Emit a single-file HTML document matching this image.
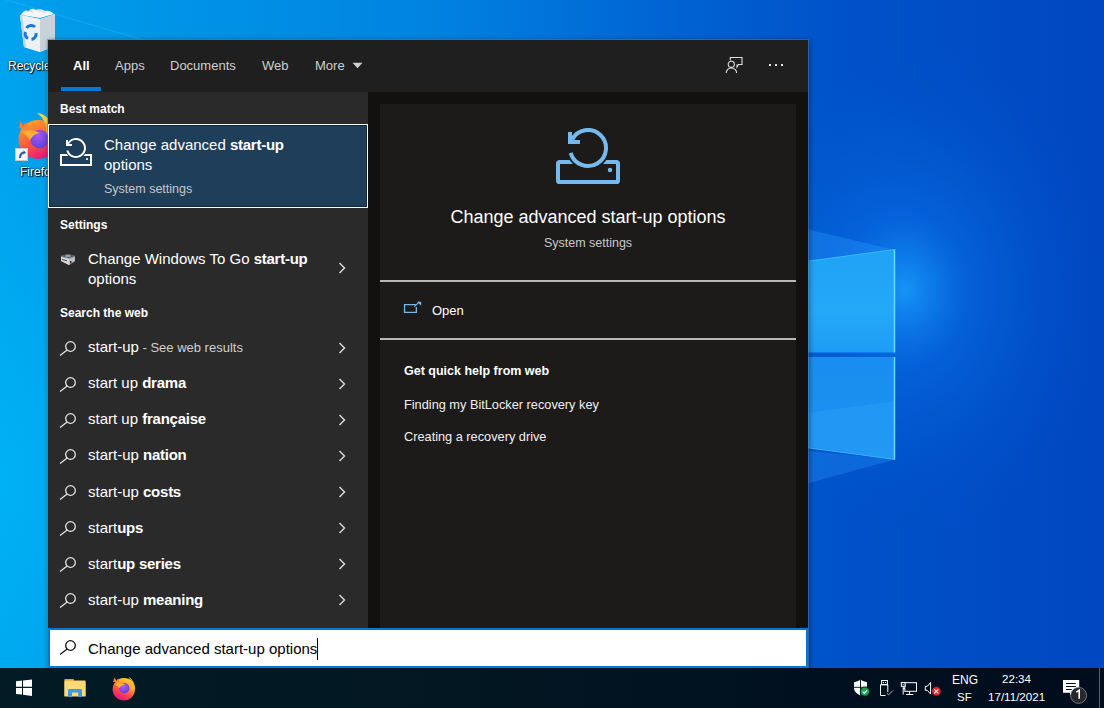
<!DOCTYPE html>
<html><head><meta charset="utf-8"><style>
*{margin:0;padding:0;box-sizing:border-box}
html,body{width:1104px;height:708px;overflow:hidden}
body{position:relative;font-family:"Liberation Sans",sans-serif;background:#0050c8}
.a{position:absolute}
.t{position:absolute;white-space:nowrap;line-height:20px}
b{font-weight:bold;letter-spacing:-0.25px}
#bg{left:0;top:0;width:1104px;height:668px;overflow:hidden;
background:linear-gradient(100deg,#00a6ee 0%,#009ce9 5%,#0078dc 50%,#0058cc 75%,#0049c2 100%)}
</style></head><body>
<svg class="a" style="left:0;top:0" width="1104" height="668" viewBox="0 0 1104 668">
<defs>
<linearGradient id="g1" x1="0" y1="0" x2="1" y2="0">
<stop offset="0" stop-color="#00a4ee"/><stop offset="0.06" stop-color="#009be9"/><stop offset="0.38" stop-color="#0084e2"/>
<stop offset="0.62" stop-color="#0062d2"/><stop offset="0.76" stop-color="#0052c9"/><stop offset="1" stop-color="#0047c1"/></linearGradient>
<radialGradient id="glow" cx="905" cy="290" r="210" gradientUnits="userSpaceOnUse" gradientTransform="translate(905 290) scale(1.0 1.2) translate(-905 -290)">
<stop offset="0" stop-color="#1aa0ff" stop-opacity="0.85"/><stop offset="0.3" stop-color="#0a78f0" stop-opacity="0.45"/><stop offset="1" stop-color="#0050c8" stop-opacity="0"/></radialGradient>
<radialGradient id="lglow" cx="0" cy="480" r="260" gradientUnits="userSpaceOnUse" gradientTransform="translate(0 480) scale(1 1.4) translate(0 -480)"><stop offset="0" stop-color="#00b4f6" stop-opacity="0.8"/><stop offset="0.5" stop-color="#00b0f4" stop-opacity="0.5"/><stop offset="1" stop-color="#00a8f0" stop-opacity="0"/></radialGradient>
<linearGradient id="pane1" x1="0" y1="0" x2="0" y2="1"><stop offset="0" stop-color="#20a2f6"/><stop offset="0.6" stop-color="#24a8f8"/><stop offset="1" stop-color="#1e9cf5"/></linearGradient>
<linearGradient id="pane2" x1="0" y1="0" x2="0" y2="1"><stop offset="0" stop-color="#1a8ef0"/><stop offset="1" stop-color="#1c92f1"/></linearGradient>
</defs>
<rect width="1104" height="668" fill="url(#g1)"/>
<rect width="1104" height="668" fill="url(#glow)"/>
<rect width="1104" height="668" fill="url(#lglow)"/>
<line x1="0" y1="-2" x2="150" y2="42" stroke="#40c0ff" stroke-width="1.2" opacity="0.3"/>
<polygon points="600,180 895,250 600,290" fill="#2a9cff" opacity="0.35"/>
<polygon points="600,289 895,249.5 895,352.5 600,352.5" fill="url(#pane1)"/>
<polygon points="600,357 895,357 895,459.5 600,420" fill="url(#pane2)"/>
<polygon points="800,414.1 895,400.9 895,459.5 800,445.6" fill="#2a9ef8" opacity="0.5"/>
<polygon points="600,540 895,459.5 600,430" fill="#2a9cff" opacity="0.3"/>
<line x1="894.5" y1="249.5" x2="894.5" y2="352.5" stroke="#5fdcff" stroke-width="1.5"/>
<line x1="894.5" y1="357" x2="894.5" y2="459.5" stroke="#5fdcff" stroke-width="1.5"/>
<line x1="600" y1="289" x2="895" y2="249.5" stroke="#50c8ff" stroke-width="1" opacity="0.7"/>
<line x1="600" y1="420" x2="895" y2="459.5" stroke="#50c8ff" stroke-width="1" opacity="0.7"/>
</svg>
<svg class="a" style="left:0;top:0" width="60" height="190" viewBox="0 0 60 190">
<defs><linearGradient id="ffb" x1="0.2" y1="0.1" x2="0.6" y2="1"><stop offset="0" stop-color="#ff9a2a"/><stop offset="0.5" stop-color="#ff5a3e"/><stop offset="1" stop-color="#e6157c"/></linearGradient>
<radialGradient id="ffp" cx="0.4" cy="0.3" r="0.8"><stop offset="0" stop-color="#a855f7"/><stop offset="1" stop-color="#5b3fd6"/></radialGradient></defs>
<polygon points="20,15 40,19 55,14 55,46 40,52 24,47" fill="#dce4ea"/>
<polygon points="20,15 40,19 40,52 24,47" fill="#eef1f3"/>
<polygon points="40,19 55,15 55,46 40,52" fill="#c8d2d9"/>
<polygon points="20,15 22,15 26,47 24,47" fill="#b8d6ee"/>
<path d="M21 15Q24 9 29 11Q31 7 36 10Q41 8 45 11Q50 10 54 14L40 18z" fill="#f4f6f8"/>
<path d="M27 12Q30 10 33 12M38 11Q42 10 45 13" fill="none" stroke="#c9d0d6" stroke-width="1"/>
<path d="M26.5 28a5.5 5.5 0 0 1 8.5-1 M36 33a5.5 5.5 0 0 1-4.5 6.5 M28 38.5a5.5 5.5 0 0 1-2.5-6.5" fill="none" stroke="#1a78d6" stroke-width="3"/>
<circle cx="38" cy="139.5" r="19.5" fill="url(#ffb)"/>
<path d="M37 113Q52 115 55 134L46 131Q47 120 37 113z" fill="#ffd53a"/>
<path d="M43 120Q52 126 52 140L46 136Q47 126 43 120z" fill="#ffb02e"/>
<path d="M19 128L20.5 121L23.5 126L26 122L28 127Q24 130 19 128z" fill="#ff7e2e"/>
<circle cx="39.5" cy="139" r="9.3" fill="url(#ffp)"/>
<path d="M22 132Q31 128 40 133Q33 134 30 140Q27 135 22 132z" fill="#ffae36"/>
<rect x="15.5" y="148.5" width="12" height="12" fill="#f4f4f4" stroke="#c8c8c8" stroke-width="1"/>
<path d="M19 158 Q19 152 24 151.5 L23 150 L26 152.5 L23 155 L24 153.5 Q21 154 21 158z" fill="#2a5aa8"/>
</svg>
<div class="t" style="left:8px;top:55.5px;font-size:12px;color:#fff;text-shadow:0 0 2px #000,1px 1px 1px #000">Recycle Bin</div>
<div class="t" style="left:20px;top:161.5px;font-size:12px;color:#fff;text-shadow:0 0 2px #000,1px 1px 1px #000">Firefox</div>
<div class="a" style="left:47px;top:39px;width:762px;height:630px;background:rgba(95,105,120,0.55);box-shadow:1px 1px 5px rgba(0,0,0,0.35)"></div>
<div class="a" style="left:48px;top:40px;width:760px;height:52px;background:#1f1f1f;"></div>
<div class="a" style="left:48px;top:92px;width:320px;height:536px;background:#2a2a2a;"></div>
<div class="a" style="left:368px;top:92px;width:440px;height:536px;background:#121110;"></div>
<div class="a" style="left:380px;top:104px;width:416px;height:524px;background:#1c1b1a;"></div>
<div class="t" style="left:73px;top:55.50px;font-size:13px;color:#fff;font-weight:bold;">All</div>
<div class="a" style="left:61px;top:87px;width:40px;height:4px;background:#0078d7;"></div>
<div class="t" style="left:115px;top:55.50px;font-size:13px;color:#cfcfcf;font-weight:normal;">Apps</div>
<div class="t" style="left:170px;top:55.50px;font-size:13px;color:#cfcfcf;font-weight:normal;">Documents</div>
<div class="t" style="left:262px;top:55.50px;font-size:13px;color:#cfcfcf;font-weight:normal;">Web</div>
<div class="t" style="left:315px;top:55.50px;font-size:13px;color:#cfcfcf;font-weight:normal;">More</div>
<div class="t" style="left:60px;top:98.84px;font-size:12px;color:#fff;font-weight:bold;">Best match</div>
<div class="t" style="left:60px;top:214.84px;font-size:12px;color:#fff;font-weight:bold;">Settings</div>
<div class="t" style="left:60px;top:302.84px;font-size:12px;color:#fff;font-weight:bold;">Search the web</div>
<div class="a" style="left:48px;top:124px;width:320px;height:84px;border:1px solid #fff;background:#1e3e5a"><div class="a" style="left:0;top:0;right:0;bottom:0;border:1px solid #0b2a47"></div></div>
<div class="t" style="left:104px;top:134.80px;font-size:15px;color:#fff;font-weight:normal;">Change advanced <b>start-up</b></div>
<div class="t" style="left:104px;top:154.80px;font-size:15px;color:#fff;font-weight:normal;">options</div>
<div class="t" style="left:104px;top:178.67px;font-size:12.5px;color:#c8c8c8;font-weight:normal;">System settings</div>
<div class="t" style="left:88px;top:248.80px;font-size:15px;color:#fff;font-weight:normal;">Change Windows To Go <b>start-up</b></div>
<div class="t" style="left:88px;top:268.80px;font-size:15px;color:#fff;font-weight:normal;">options</div>
<svg class="a" style="left:337px;top:262px" width="10" height="12" viewBox="0 0 10 12"><polyline points="2.5,1 7.5,6 2.5,11" fill="none" stroke="#d6d6d6" stroke-width="1.5"/></svg>
<div class="t" style="left:88px;top:337.30px;font-size:15px;color:#fff;font-weight:normal;">start-up<span style="font-size:13px;color:#d0d0d0"> - See web results</span></div>
<svg class="a" style="left:59px;top:340.5px" width="18" height="15" viewBox="0 0 18 15"><circle cx="11.5" cy="5.5" r="4.8" fill="none" stroke="#e6e6e6" stroke-width="1.3"/><line x1="8.2" y1="9" x2="1" y2="14.5" stroke="#e6e6e6" stroke-width="1.3"/></svg>
<svg class="a" style="left:337px;top:341.5px" width="10" height="12" viewBox="0 0 10 12"><polyline points="2.5,1 7.5,6 2.5,11" fill="none" stroke="#d6d6d6" stroke-width="1.5"/></svg>
<div class="t" style="left:88px;top:373.35px;font-size:15px;color:#fff;font-weight:normal;">start up <b>drama</b></div>
<svg class="a" style="left:59px;top:376.55px" width="18" height="15" viewBox="0 0 18 15"><circle cx="11.5" cy="5.5" r="4.8" fill="none" stroke="#e6e6e6" stroke-width="1.3"/><line x1="8.2" y1="9" x2="1" y2="14.5" stroke="#e6e6e6" stroke-width="1.3"/></svg>
<svg class="a" style="left:337px;top:377.55px" width="10" height="12" viewBox="0 0 10 12"><polyline points="2.5,1 7.5,6 2.5,11" fill="none" stroke="#d6d6d6" stroke-width="1.5"/></svg>
<div class="t" style="left:88px;top:409.40px;font-size:15px;color:#fff;font-weight:normal;">start up <b>française</b></div>
<svg class="a" style="left:59px;top:412.6px" width="18" height="15" viewBox="0 0 18 15"><circle cx="11.5" cy="5.5" r="4.8" fill="none" stroke="#e6e6e6" stroke-width="1.3"/><line x1="8.2" y1="9" x2="1" y2="14.5" stroke="#e6e6e6" stroke-width="1.3"/></svg>
<svg class="a" style="left:337px;top:413.6px" width="10" height="12" viewBox="0 0 10 12"><polyline points="2.5,1 7.5,6 2.5,11" fill="none" stroke="#d6d6d6" stroke-width="1.5"/></svg>
<div class="t" style="left:88px;top:445.45px;font-size:15px;color:#fff;font-weight:normal;">start-up <b>nation</b></div>
<svg class="a" style="left:59px;top:448.65px" width="18" height="15" viewBox="0 0 18 15"><circle cx="11.5" cy="5.5" r="4.8" fill="none" stroke="#e6e6e6" stroke-width="1.3"/><line x1="8.2" y1="9" x2="1" y2="14.5" stroke="#e6e6e6" stroke-width="1.3"/></svg>
<svg class="a" style="left:337px;top:449.65px" width="10" height="12" viewBox="0 0 10 12"><polyline points="2.5,1 7.5,6 2.5,11" fill="none" stroke="#d6d6d6" stroke-width="1.5"/></svg>
<div class="t" style="left:88px;top:481.50px;font-size:15px;color:#fff;font-weight:normal;">start-up <b>costs</b></div>
<svg class="a" style="left:59px;top:484.7px" width="18" height="15" viewBox="0 0 18 15"><circle cx="11.5" cy="5.5" r="4.8" fill="none" stroke="#e6e6e6" stroke-width="1.3"/><line x1="8.2" y1="9" x2="1" y2="14.5" stroke="#e6e6e6" stroke-width="1.3"/></svg>
<svg class="a" style="left:337px;top:485.7px" width="10" height="12" viewBox="0 0 10 12"><polyline points="2.5,1 7.5,6 2.5,11" fill="none" stroke="#d6d6d6" stroke-width="1.5"/></svg>
<div class="t" style="left:88px;top:517.55px;font-size:15px;color:#fff;font-weight:normal;">start<b>ups</b></div>
<svg class="a" style="left:59px;top:520.75px" width="18" height="15" viewBox="0 0 18 15"><circle cx="11.5" cy="5.5" r="4.8" fill="none" stroke="#e6e6e6" stroke-width="1.3"/><line x1="8.2" y1="9" x2="1" y2="14.5" stroke="#e6e6e6" stroke-width="1.3"/></svg>
<svg class="a" style="left:337px;top:521.75px" width="10" height="12" viewBox="0 0 10 12"><polyline points="2.5,1 7.5,6 2.5,11" fill="none" stroke="#d6d6d6" stroke-width="1.5"/></svg>
<div class="t" style="left:88px;top:553.60px;font-size:15px;color:#fff;font-weight:normal;">start<b>up series</b></div>
<svg class="a" style="left:59px;top:556.8px" width="18" height="15" viewBox="0 0 18 15"><circle cx="11.5" cy="5.5" r="4.8" fill="none" stroke="#e6e6e6" stroke-width="1.3"/><line x1="8.2" y1="9" x2="1" y2="14.5" stroke="#e6e6e6" stroke-width="1.3"/></svg>
<svg class="a" style="left:337px;top:557.8px" width="10" height="12" viewBox="0 0 10 12"><polyline points="2.5,1 7.5,6 2.5,11" fill="none" stroke="#d6d6d6" stroke-width="1.5"/></svg>
<div class="t" style="left:88px;top:589.65px;font-size:15px;color:#fff;font-weight:normal;">start-up <b>meaning</b></div>
<svg class="a" style="left:59px;top:592.8499999999999px" width="18" height="15" viewBox="0 0 18 15"><circle cx="11.5" cy="5.5" r="4.8" fill="none" stroke="#e6e6e6" stroke-width="1.3"/><line x1="8.2" y1="9" x2="1" y2="14.5" stroke="#e6e6e6" stroke-width="1.3"/></svg>
<svg class="a" style="left:337px;top:593.8499999999999px" width="10" height="12" viewBox="0 0 10 12"><polyline points="2.5,1 7.5,6 2.5,11" fill="none" stroke="#d6d6d6" stroke-width="1.5"/></svg>
<div class="a" style="left:48px;top:628px;width:760px;height:40px;background:#fff;border:2px solid #0078d7"></div>
<svg class="a" style="left:59px;top:640px" width="18" height="15" viewBox="0 0 18 15"><circle cx="11.5" cy="5.5" r="4.8" fill="none" stroke="#111" stroke-width="1.3"/><line x1="8.2" y1="9" x2="1" y2="14.5" stroke="#111" stroke-width="1.3"/></svg>
<div class="t" style="left:88px;top:638.80px;font-size:15px;color:#000;font-weight:normal;">Change advanced start-up options</div>
<div class="a" style="left:317px;top:638px;width:1px;height:22px;background:#000;"></div>
<svg class="a" style="left:60px;top:138px" width="32" height="28" viewBox="0 0 32 28"><rect x="1" y="17" width="30" height="10" rx="0" fill="none" stroke="#fff" stroke-width="2"/><circle cx="16" cy="10" r="11" fill="#1e3e5a"/><path d="M8.05 5.78 A9 9 0 1 1 7.33 12.42" fill="none" stroke="#fff" stroke-width="2"/><path d="M6 2h2v4h4v2h-6z" fill="#fff"/><circle cx="27" cy="21" r="1.1" fill="#fff"/></svg>
<svg class="a" style="left:556px;top:128px" width="64" height="56" viewBox="0 0 32 28"><rect x="1" y="17" width="30" height="10" rx="0.8" fill="none" stroke="#76b9ed" stroke-width="2"/><circle cx="16" cy="10" r="11" fill="#1c1b1a"/><path d="M8.05 5.78 A9 9 0 1 1 7.33 12.42" fill="none" stroke="#76b9ed" stroke-width="2"/><path d="M6 2h2v4h4v2h-6z" fill="#76b9ed"/><circle cx="27" cy="21" r="1.1" fill="#76b9ed"/></svg>
<svg class="a" style="left:60px;top:253px" width="16" height="14" viewBox="0 0 16 14"><polygon points="1,3 8,1 15,3 15,8 9,12 1,8" fill="#9a9a9a"/><polygon points="1,3 8,1 15,3 9,5" fill="#555"/><ellipse cx="8" cy="3" rx="3" ry="1" fill="#7fb0e0"/><polygon points="1,4 9,6 9,12 1,8" fill="#d8d8d8"/><polygon points="2,6 7,7.2 7,8.2 2,7" fill="#444"/><polygon points="9,6 15,4 15,8 9,12" fill="#bdbdbd"/><rect x="10" y="8" width="1.5" height="2.5" fill="#333"/></svg>
<svg class="a" style="left:724px;top:55px" width="22" height="20" viewBox="0 0 22 20"><path d="M6.3 5.5V2.5H18V9.5H14.5L13 12V9.5" fill="none" stroke="#e0e0e0" stroke-width="1.1"/><circle cx="7.3" cy="9.3" r="3.1" fill="none" stroke="#e0e0e0" stroke-width="1.1"/><path d="M2.2 18A5.2 5 0 0 1 12.6 18" fill="none" stroke="#e0e0e0" stroke-width="1.1"/></svg>
<div class="a" style="left:769px;top:64px;width:2px;height:2px;background:#e8e8e8;"></div>
<div class="a" style="left:775px;top:64px;width:2px;height:2px;background:#e8e8e8;"></div>
<div class="a" style="left:781px;top:64px;width:2px;height:2px;background:#e8e8e8;"></div>
<svg class="a" style="left:352px;top:62px" width="11" height="7" viewBox="0 0 11 7"><polygon points="0.5,0.8 10.5,0.8 5.5,6.3" fill="#d0d0d0"/></svg>
<div class="t" style="left:288px;width:600px;text-align:center;top:207.26px;font-size:18px;color:#fff;font-weight:normal;">Change advanced start-up options</div>
<div class="t" style="left:288px;width:600px;text-align:center;top:232.87px;font-size:12.5px;color:#c8c8c8;font-weight:normal;">System settings</div>
<div class="a" style="left:380px;top:280px;width:416px;height:2px;background:#b8b8b8;"></div>
<div class="a" style="left:380px;top:338px;width:416px;height:2px;background:#b8b8b8;"></div>
<svg class="a" style="left:400px;top:298px" width="24" height="20" viewBox="0 0 24 20"><path d="M15.8 6.55H4.55V14.45H16.35V9" fill="none" stroke="#76b9ed" stroke-width="1.3"/><path d="M14.3 8.6L19.3 3.9" fill="none" stroke="#76b9ed" stroke-width="1.3"/><polygon points="17.2,3.7 21.2,3.7 21.2,7.7" fill="#76b9ed"/></svg>
<div class="t" style="left:432px;top:300.50px;font-size:13px;color:#fff;font-weight:normal;">Open</div>
<div class="t" style="left:404px;top:360.67px;font-size:12.5px;color:#fff;font-weight:bold;">Get quick help from web</div>
<div class="t" style="left:404px;top:394.58px;font-size:12.75px;color:#f0f0f0;font-weight:normal;">Finding my BitLocker recovery key</div>
<div class="t" style="left:404px;top:426.58px;font-size:12.75px;color:#f0f0f0;font-weight:normal;">Creating a recovery drive</div>
<div class="a" style="left:0px;top:668px;width:1104px;height:40px;background:linear-gradient(90deg,#021b24,#021722 40%,#010f1f 80%,#010c1c);"></div>
<svg class="a" style="left:0;top:668px" width="150" height="40" viewBox="0 668 150 40">
<polygon points="16,681.2 22,680.6 22,686.8 16,686.8" fill="#fff"/>
<polygon points="23,680.5 32,679.6 32,686.8 23,686.8" fill="#fff"/>
<polygon points="16,688 22,688 22,694.6 16,693.9" fill="#fff"/>
<polygon points="23,688 32,688 32,696 23,694.8" fill="#fff"/>
<rect x="64.5" y="679" width="9.5" height="3" rx="0.5" fill="#e5a11a"/>
<rect x="64.5" y="680.5" width="21" height="15.8" fill="#fbd46c"/>
<rect x="64.5" y="682" width="21" height="14.3" fill="#fcda7a"/>
<path d="M68 697V690.2Q68 689 69.2 689H80.8Q82 689 82 690.2V697H78.2V692.4H72V697z" fill="#3d9be6"/>
<defs><linearGradient id="tfb" x1="0.85" y1="0.05" x2="0.35" y2="1"><stop offset="0" stop-color="#ffe03a"/><stop offset="0.35" stop-color="#ff9a2a"/><stop offset="0.7" stop-color="#ff4050"/><stop offset="1" stop-color="#e4157e"/></linearGradient>
<radialGradient id="tfp" cx="0.4" cy="0.3" r="0.8"><stop offset="0" stop-color="#b45cf5"/><stop offset="1" stop-color="#5a3ed8"/></radialGradient></defs>
<circle cx="123.8" cy="689.3" r="11.2" fill="url(#tfb)"/>
<path d="M126 675.5Q134 679 135 687Q135 684 132 682Q131 678 126 675.5z" fill="#ffd02e"/>
<path d="M128.5 678Q135 682 135 689L131 690Q131 682 128.5 678z" fill="#ffb52e"/>
<path d="M113 682L114.5 677.5L116.5 681L118 678.5L119 682z" fill="#ff8a2e"/>
<circle cx="124.2" cy="688" r="5.2" fill="url(#tfp)"/>
<path d="M115 684Q120 681.5 125 684.5Q121 685 119 688Q117 685.5 115 684z" fill="#ffae36"/>
</svg>
<svg class="a" style="left:840px;top:668px" width="264" height="40" viewBox="840 668 264 40">
<path d="M854 682.2Q857.5 681.5 860.5 679.8Q863.5 681.5 867 682.2V688Q867 693 860.5 695.5Q854 693 854 688z" fill="#fff"/>
<line x1="860.5" y1="680" x2="860.5" y2="695.5" stroke="#000" stroke-width="0.9"/>
<line x1="854" y1="687.3" x2="867" y2="687.3" stroke="#000" stroke-width="0.9"/>
<circle cx="864.9" cy="691.6" r="4.6" fill="#16a34a" stroke="#021722" stroke-width="0.8"/>
<path d="M862.7 691.7L864.3 693.1L867.2 690.3" fill="none" stroke="#fff" stroke-width="1.2"/>
<rect x="881.6" y="680.5" width="5.8" height="4.2" fill="none" stroke="#fff" stroke-width="1"/>
<rect x="883" y="682" width="1" height="1" fill="#fff"/><rect x="885" y="682" width="1" height="1" fill="#fff"/>
<path d="M887.8 692V684.7H880.5V695.5H885.5" fill="none" stroke="#fff" stroke-width="1"/>
<path d="M886.8 693.2L888.6 694.8L892.8 690.6" fill="none" stroke="#b8b8b8" stroke-width="1"/>
<rect x="904.8" y="682.7" width="11.7" height="8.6" fill="none" stroke="#fff" stroke-width="1"/>
<rect x="901.3" y="682.5" width="3.8" height="3.8" fill="#021722" stroke="#fff" stroke-width="1"/>
<path d="M902.4 683.8L903.2 684.8L904 683.8" fill="none" stroke="#fff" stroke-width="0.6"/>
<line x1="903.2" y1="686.3" x2="903.2" y2="694.5" stroke="#fff" stroke-width="1"/>
<line x1="909.5" y1="691.3" x2="909.5" y2="694.5" stroke="#fff" stroke-width="1"/>
<line x1="906" y1="694.5" x2="913.3" y2="694.5" stroke="#fff" stroke-width="1"/>
<rect x="903.2" y="688" width="1.6" height="1" fill="#fff"/>
<path d="M925.3 686.3H927.3L930.6 682.5V694L927.3 690.3H925.3z" fill="none" stroke="#fff" stroke-width="1"/>
<circle cx="936.3" cy="691.3" r="4.8" fill="#e0242c" stroke="#021722" stroke-width="0.8"/>
<path d="M934.3 689.3L938.3 693.3M938.3 689.3L934.3 693.3" stroke="#fff" stroke-width="1.1"/>
<path d="M1063 680H1079.2V692.8H1073L1070 695.5V692.8H1063z" fill="#fff"/>
<path d="M1066 683.5H1075.8M1066 686.5H1075.8M1066 689.5H1071.8" stroke="#010c1c" stroke-width="1"/>
<circle cx="1078.6" cy="695.4" r="8" fill="#26282c" stroke="#8a8d92" stroke-width="0.8"/>
<line x1="1099.5" y1="668" x2="1099.5" y2="708" stroke="#5a6068" stroke-width="1"/>
</svg>
<svg class="a" style="left:1074px;top:689px" width="9" height="11" viewBox="0 0 9 11"><path d="M2.3 3.2L5.2 1.3V9.7" fill="none" stroke="#fff" stroke-width="1.6"/></svg>
<div class="t" style="left:952px;top:669.84px;font-size:12px;color:#fff;font-weight:normal;">ENG</div>
<div class="t" style="left:957px;top:687.02px;font-size:11.5px;color:#fff;font-weight:normal;">SF</div>
<div class="t" style="left:1002px;top:669.48px;font-size:11.6px;color:#fff;font-weight:normal;">22:34</div>
<div class="t" style="left:988px;top:686.98px;font-size:11.6px;color:#fff;font-weight:normal;">17/11/2021</div>
</body></html>
